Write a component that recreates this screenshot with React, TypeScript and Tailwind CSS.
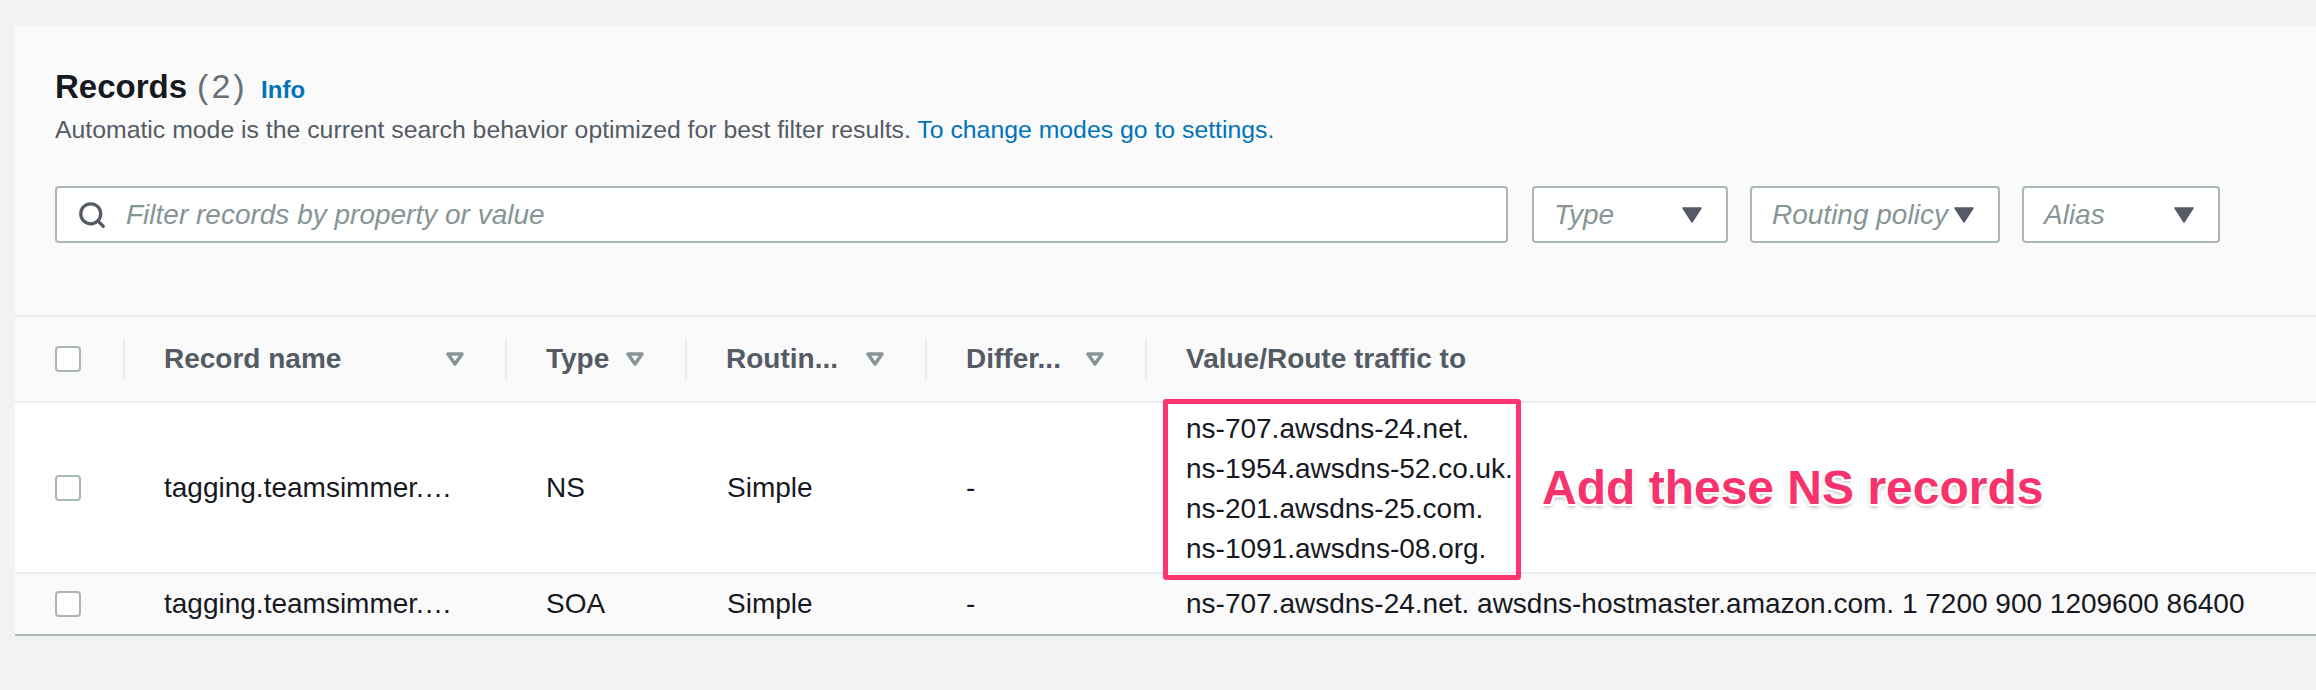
import { Search } from "lucide-react";

const font = { fontFamily: '"Liberation Sans", Arial, sans-serif' };

const SortIcon = () => (
	<svg width="20" height="16" viewBox="0 0 20 16" className="shrink-0">
		<path d="M3 3 L17 3 L10 13 Z" fill="none" stroke="#879596" strokeWidth="3.5" strokeLinejoin="round" />
	</svg>
);

const Caret = () => (
	<svg width="20" height="16" viewBox="0 0 20 16" className="shrink-0">
		<path d="M1 1 L19 1 L10 15 Z" fill="#545b64" stroke="#545b64" strokeWidth="1.5" strokeLinejoin="round" />
	</svg>
);

const Checkbox = () => (
	<div className="w-[26px] h-[26px] rounded-[4px] border-2 border-[#aab7b8] bg-white" />
);

const Dropdown: React.FC<{ label: string; width: string }> = ({ label, width }) => (
	<div className={`${width} h-[57px] border-2 border-[#aab7b8] rounded-[4px] bg-white flex items-center justify-between pl-[20px] pr-[24px]`}>
		<span className="italic text-[28px] text-[#879596] whitespace-nowrap">{label}</span>
		<Caret />
	</div>
);

const HeaderCell: React.FC<{ label: string; sortable?: boolean }> = ({ label, sortable = true }) => (
	<div className="flex items-center">
		<div className="w-[2px] h-[42px] bg-[#eaeded] shrink-0" />
		<div className="flex-1 flex items-center justify-between pl-[39px] pr-[40px]">
			<span className="text-[28px] font-bold text-[#545b64] whitespace-nowrap">{label}</span>
			{sortable && <SortIcon />}
		</div>
	</div>
);

const nsValues = [
	"ns-707.awsdns-24.net.",
	"ns-1954.awsdns-52.co.uk.",
	"ns-201.awsdns-25.com.",
	"ns-1091.awsdns-08.org.",
];

const grid = "grid grid-cols-[108px_382px_180px_240px_220px_1fr]";

export default function App() {
	return (
		<div className="w-[2316px] h-[690px] bg-[#f2f3f3] pt-[25px] pl-[15px] overflow-hidden" style={font}>
			<div className="bg-[#fafafa]">
				{/* Header */}
				<div className="px-[40px] pt-[41px]">
					<div className="flex items-baseline leading-[40px]">
						<span className="text-[33px] font-bold text-[#16191f]">Records</span>
						<span className="inline-block w-[56px] text-[34px] tracking-[3px] text-[#687078] ml-[10px]">(2)</span>
						<span className="text-[24px] font-bold text-[#0073bb] ml-[8px]">Info</span>
					</div>
					<p className="mt-[4px] text-[24.8px] leading-[32px] text-[#545b64]">
						Automatic mode is the current search behavior optimized for best filter results.{" "}
						<span className="text-[#0073bb]">To change modes go to settings.</span>
					</p>

					{/* Filters */}
					<div className="mt-[40px] flex items-center">
						<div className="w-[1453px] h-[57px] border-2 border-[#aab7b8] rounded-[4px] bg-white flex items-center pl-[20px] gap-[19px]">
							<Search size={30} strokeWidth={2.6} color="#545b64" />
							<span className="italic text-[28px] text-[#879596]">Filter records by property or value</span>
						</div>
						<div className="ml-[24px] flex gap-[22px]">
							<Dropdown label="Type" width="w-[196px]" />
							<Dropdown label="Routing policy" width="w-[250px]" />
							<Dropdown label="Alias" width="w-[198px]" />
						</div>
					</div>
				</div>

				{/* Table */}
				<div className="mt-[72px] text-[28px] text-[#16191f]">
					<div className={`${grid} h-[88px] border-t-2 border-b-2 border-[#eaeded]`}>
						<div className="flex items-center pl-[40px]">
							<Checkbox />
						</div>
						<HeaderCell label="Record name" />
						<HeaderCell label="Type" />
						<HeaderCell label="Routin..." />
						<HeaderCell label="Differ..." />
						<HeaderCell label="Value/Route traffic to" sortable={false} />
					</div>

					<div className={`${grid} h-[171px] bg-white border-b-2 border-[#eaeded]`}>
						<div className="flex items-center pl-[40px]">
							<Checkbox />
						</div>
						<div className="flex items-center pl-[41px] whitespace-nowrap">tagging.teamsimmer.…</div>
						<div className="flex items-center pl-[41px]">NS</div>
						<div className="flex items-center pl-[42px]">Simple</div>
						<div className="flex items-center pl-[41px]">-</div>
						<div className="relative pl-[41px] pt-[6px] leading-[40px]">
							{nsValues.map((v) => (
								<div key={v} className="whitespace-nowrap">{v}</div>
							))}
							<div className="absolute left-[18px] top-[-4px] w-[358px] h-[181px] border-[5px] border-[#ff336f] rounded-[3px]" />
							<div className="absolute left-[397px] top-[58px] leading-[54px] text-[48px] font-bold text-[#f7326c] whitespace-nowrap [text-shadow:-2px_-2px_0_#fff,2px_-2px_0_#fff,-2px_2px_0_#fff,2px_2px_0_#fff,0_3px_4px_rgba(0,0,0,0.35)]">
								Add these NS records
							</div>
						</div>
					</div>

					<div className={`${grid} h-[62px] bg-[#fafafa] border-b-2 border-[#aab7b8]`}>
						<div className="flex items-center pl-[40px]">
							<Checkbox />
						</div>
						<div className="flex items-center pl-[41px] whitespace-nowrap">tagging.teamsimmer.…</div>
						<div className="flex items-center pl-[41px]">SOA</div>
						<div className="flex items-center pl-[42px]">Simple</div>
						<div className="flex items-center pl-[41px]">-</div>
						<div className="flex items-center pl-[41px] whitespace-nowrap">
							ns-707.awsdns-24.net. awsdns-hostmaster.amazon.com. 1 7200 900 1209600 86400
						</div>
					</div>
				</div>
			</div>
		</div>
	);
}
